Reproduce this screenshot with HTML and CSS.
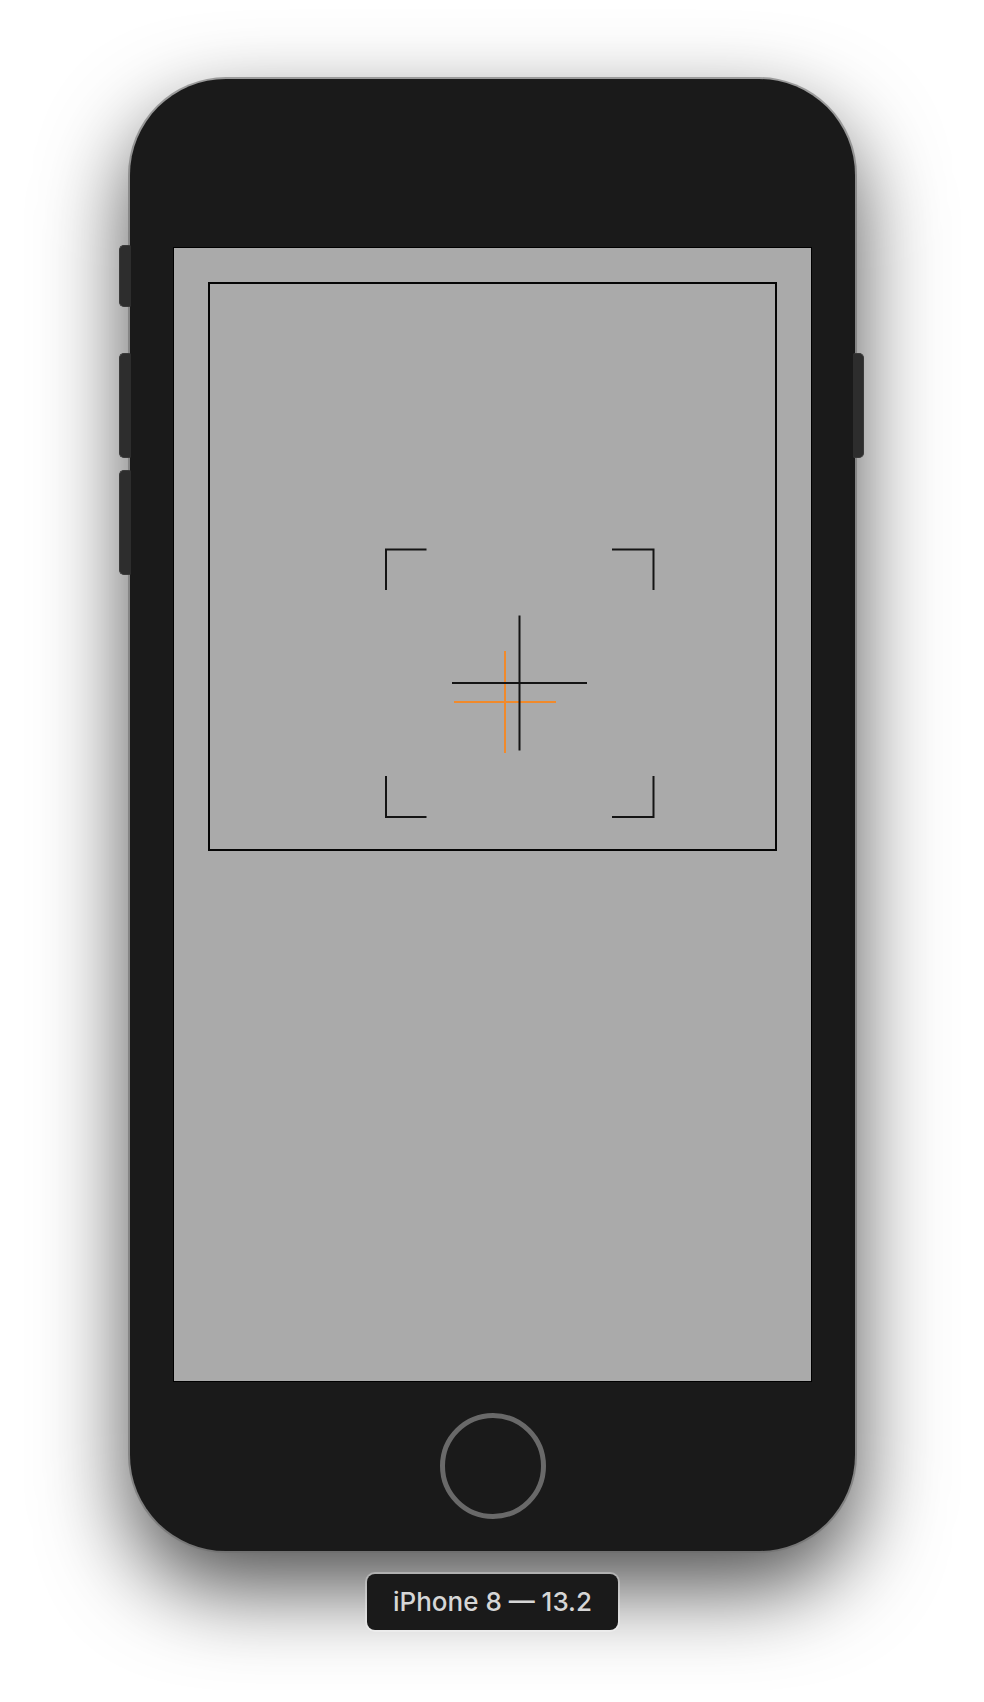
FILE: index.html
```html
<!DOCTYPE html>
<html lang="en">
<head>
<meta charset="utf-8">
<meta name="viewport" content="width=device-width, initial-scale=1">
<title>iPhone 8 — 13.2</title>
<link rel="stylesheet" href="styles.css">
</head>
<body>
<main class="simulator">
  <div class="device">
    <span class="key key-mute"></span>
    <span class="key key-up"></span>
    <span class="key key-down"></span>
    <span class="key key-power"></span>
    <div class="screen">
      <svg class="canvas" viewBox="0 0 569 569" fill="none" stroke-width="2" role="img" aria-label="Framing guide">
        <rect x="1" y="1" width="567" height="567" stroke="#050505"/>
        <g stroke="#f18a2b">
          <path d="M246 420H348"/>
          <path d="M297 369V471"/>
        </g>
        <g stroke="#141414">
          <path d="M244 401H379"/>
          <path d="M311.500 333.500V468.500"/>
          <path d="M178 308V267.500H218.500M404 267.500H445.500V308M445.500 494V535H404M218.500 535H178V494"/>
        </g>
      </svg>
    </div>
    <div class="chin"><button class="home" type="button" aria-label="Home"></button></div>
  </div>
  <div class="caption">iPhone 8 — 13.2</div>
</main>
</body>
</html>
```

FILE: styles.css
```css
* { box-sizing: border-box; }

body {
  margin: 0;
  background: #fff;
  overflow-x: hidden;
  font-family: Inter, "Liberation Sans", sans-serif;
}

.simulator {
  display: flex;
  flex-direction: column;
  align-items: center;
  gap: 23px;
  padding: 79px 129px 60px 130px;
}

.device {
  position: relative;
  width: 100%;
  padding: 169px 44px 0;
  background: #1a1a1a;
  border-radius: 96px;
  box-shadow: 0 0 0 2px rgba(110, 110, 110, 0.6), 0 36px 88px rgba(0, 0, 0, 0.7);
}

.screen {
  aspect-ratio: 637 / 1133;
  padding: 34px;
  background: #aaa;
  box-shadow: 0 0 0 1px #000;
}

.canvas {
  display: block;
  width: 100%;
}

.chin {
  display: flex;
  align-items: center;
  justify-content: center;
  height: 170px;
}

.home {
  width: 106px;
  height: 106px;
  padding: 0;
  background: transparent;
  border: 5px solid #696969;
  border-radius: 50%;
}

.key {
  position: absolute;
  left: -11px;
  width: 12px;
  height: 105px;
  background: #2d2d2d;
  border: 1px solid #3a3a3a;
  border-right: 0;
  border-radius: 5px 2px 2px 5px;
}

.key-mute { top: 166px; height: 62px; }
.key-up { top: 274px; }
.key-down { top: 391px; }

.key-power {
  top: 274px;
  right: -9px;
  left: auto;
  width: 11px;
  border-right: 1px solid #3a3a3a;
  border-left: 0;
  border-radius: 2px 5px 5px 2px;
}

.caption {
  position: relative;
  padding: 12px 26px;
  color: #d6d6d6;
  background: #1a1a1a;
  border-radius: 8px;
  box-shadow: 0 0 0 2px rgba(255, 255, 255, 0.3);
  font-size: 26px;
  font-weight: 500;
  line-height: 32px;
}
```
